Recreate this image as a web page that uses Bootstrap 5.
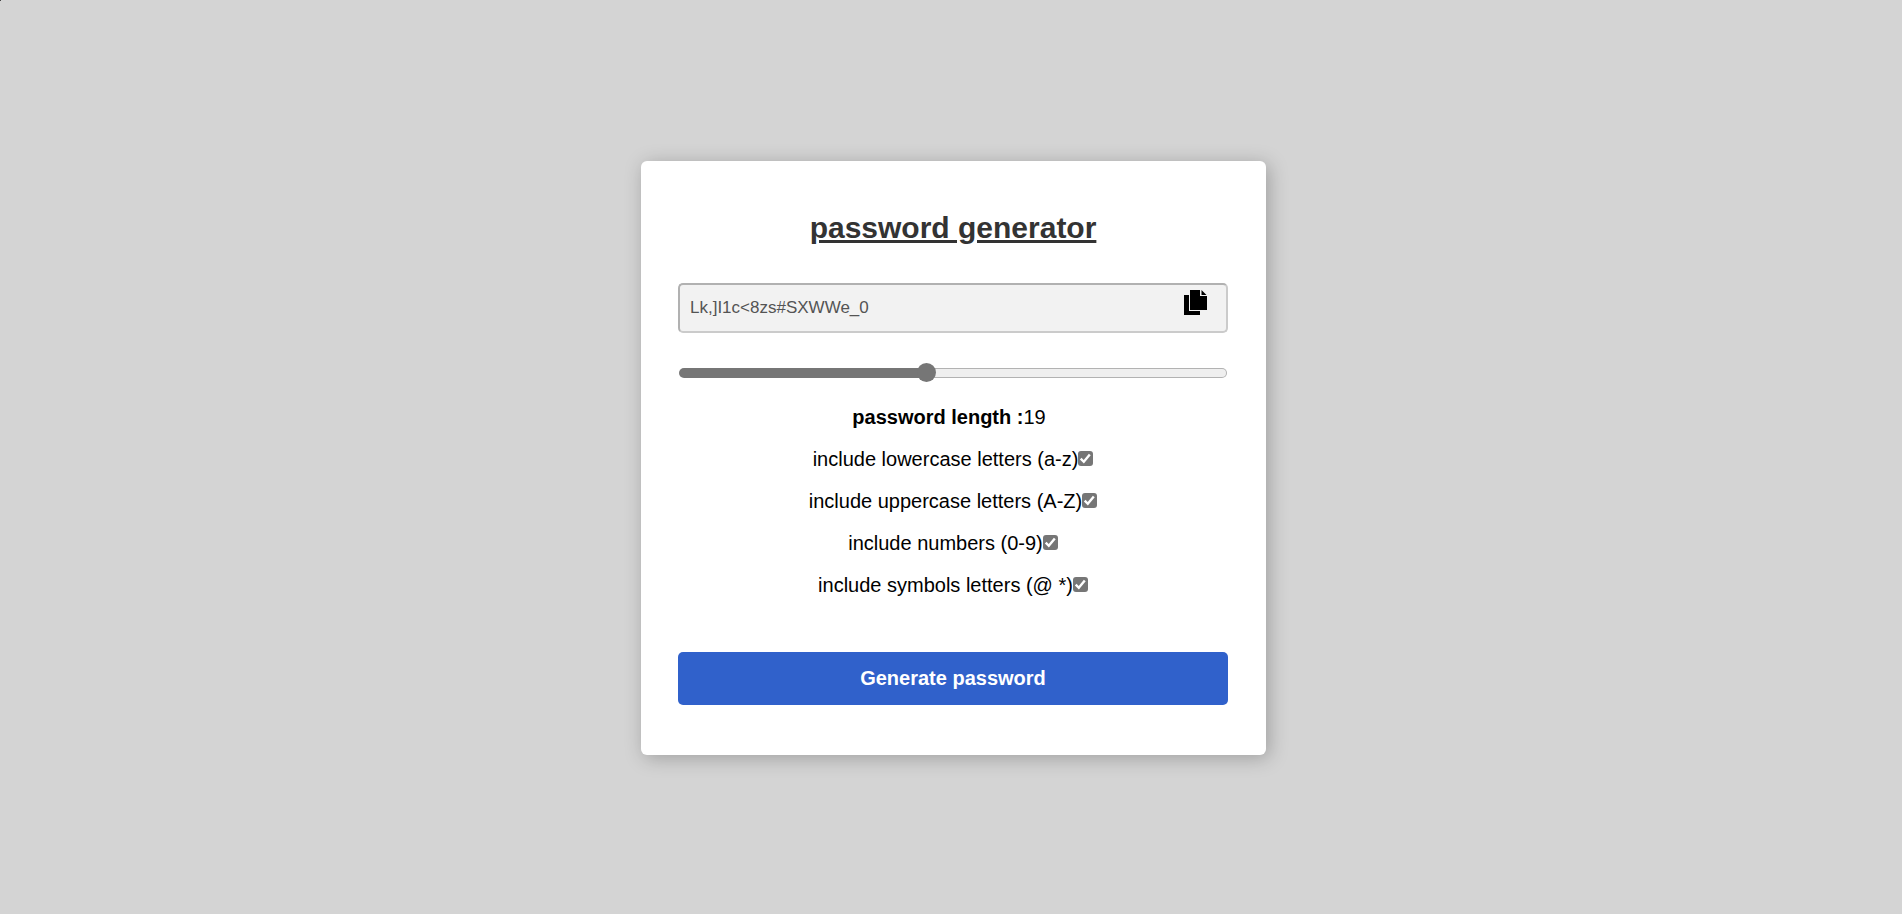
<!DOCTYPE html>
<html lang="en">
<head>
<meta charset="utf-8">
<meta name="viewport" content="width=device-width, initial-scale=1">
<title>password generator</title>
<link href="https://cdn.jsdelivr.net/npm/bootstrap@5.3.0/dist/css/bootstrap.min.css" rel="stylesheet">
<style>
  body { background: #d4d4d4; color: #000; font-family: "Liberation Sans", Arial, sans-serif; font-size: 20px; line-height: 24px; }
  body::before { content: ""; position: absolute; top: 0; left: 0; width: 1px; height: 1px; background: #444; }
  .stage { padding: 1px 0 0 5px; }
  .generator { width: 100%; max-width: 625px; padding: 49px 38px 50px 37px; border: 0; border-radius: 6px; box-shadow: 3px 3px 19px rgba(0, 0, 0, .25); color: #000; }
  .generator h1 { color: #333; font-size: 30px; line-height: 36px; font-weight: 700; margin-bottom: 37px; }
  .password-box { width: 100%; height: 50px; padding: 0 60px 0 10px; border: 2px solid; border-color: #b1b1b1 #cbcbcb #cbcbcb #b1b1b1; border-radius: 5px; background: #f2f2f2; color: #545454; font-size: 17px; }
  .copy-btn { top: 7px; right: 21px; line-height: 0; }
  .length-slider { appearance: none; -webkit-appearance: none; display: block; height: 20px; margin: 30px 1px 22px; background: transparent; }
  .length-slider::-webkit-slider-runnable-track { height: 10px; box-sizing: border-box; border: 1px solid transparent; border-radius: 5px; background: linear-gradient(to right, #767676 45%, transparent 45%) border-box, linear-gradient(#efefef, #efefef) padding-box, linear-gradient(#b2b2b2, #b2b2b2) border-box; }
  .length-slider::-webkit-slider-thumb { -webkit-appearance: none; width: 19px; height: 19px; margin-top: -6px; border-radius: 50%; background: #767676; }
  .option-list { gap: 18px; }
  .length-text { padding-right: 8px; }
  .tick { appearance: none; -webkit-appearance: none; width: 15px; height: 15px; margin: 0; border-radius: 3px; background: #767676 url("data:image/svg+xml,%3Csvg xmlns='http://www.w3.org/2000/svg' viewBox='0 0 15 15'%3E%3Cpath d='M2.7 7.7l3.1 3.1 6-7.2' fill='none' stroke='white' stroke-width='2.4'/%3E%3C/svg%3E") center/15px; }
  .tick:not(:checked) { background: #fff; border: 1px solid #767676; }
  .generate { margin-top: 55px; height: 53px; border: 0; border-radius: 5px; background: #3061cb; color: #fff; font-size: 20px; font-weight: 700; }
  .generate:hover { background: #2854b4; color: #fff; }
</style>
</head>
<body>
<main class="stage min-vh-100 d-flex align-items-center justify-content-center">
  <form class="generator card">
    <h1 class="text-center text-decoration-underline">password generator</h1>
    <div class="position-relative">
      <input class="password-box d-block" type="text" value="Lk,]I1c&lt;8zs#SXWWe_0" aria-label="Generated password" readonly>
      <button class="copy-btn position-absolute border-0 bg-transparent p-0" type="button" aria-label="Copy password">
        <svg width="23" height="25" viewBox="0 0 23 25" aria-hidden="true"><path d="M6 0h10v6h7v14H6zM17.5 0l5 5h-5zM0 5h5v16h11v4H0z"/></svg>
      </button>
    </div>
    <input class="length-slider" id="length" type="range" min="10" max="30" value="19" aria-label="Password length">
    <div class="option-list d-flex flex-column align-items-center">
      <div class="length-text"><label for="length"><b>password length :</b></label><output for="length">19</output></div>
      <div class="d-flex align-items-center"><label for="lower">include lowercase letters (a-z)</label><input class="tick" id="lower" type="checkbox" checked></div>
      <div class="d-flex align-items-center"><label for="upper">include uppercase letters (A-Z)</label><input class="tick" id="upper" type="checkbox" checked></div>
      <div class="d-flex align-items-center"><label for="numbers">include numbers (0-9)</label><input class="tick" id="numbers" type="checkbox" checked></div>
      <div class="d-flex align-items-center"><label for="symbols">include symbols letters (@ *)</label><input class="tick" id="symbols" type="checkbox" checked></div>
    </div>
    <button class="generate btn w-100" type="button">Generate password</button>
  </form>
</main>
<script src="https://cdn.jsdelivr.net/npm/bootstrap@5.3.0/dist/js/bootstrap.bundle.min.js"></script>
</body>
</html>
